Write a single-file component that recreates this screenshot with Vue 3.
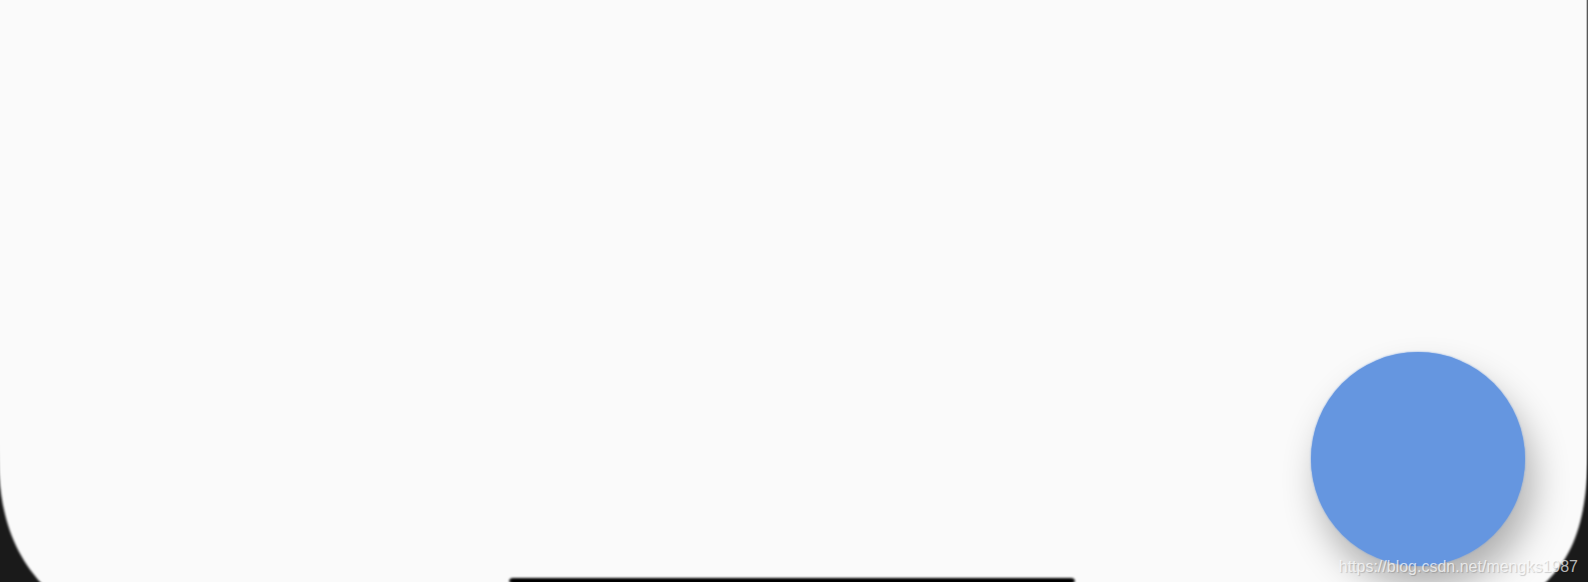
<script setup>
const link = 'https://blog.csdn.net/mengks1987'
</script>

<template>
  <main class="screen">
    <button class="fab" type="button" aria-label="Action"></button>
    <footer class="bottom">
      <svg class="corner left" viewBox="0 0 60 152" aria-hidden="true">
        <path d="M-6 10 L-2 10 C-2 62 3 112 42 154 L-6 154 Z" />
      </svg>
      <div class="notch"></div>
      <svg class="corner right" viewBox="0 0 64 152" aria-hidden="true">
        <path d="M70 0 L65 0 C64 66 60 118 20 154 L70 154 Z" />
      </svg>
    </footer>
    <a class="credit" :href="link">{{ link }}</a>
  </main>
</template>

<style>
body {
  margin: 0;
}
</style>

<style scoped>
.screen {
  position: relative;
  box-sizing: border-box;
  display: flex;
  flex-direction: column;
  justify-content: flex-end;
  min-height: 100vh;
  overflow: hidden;
  border-bottom: 4px solid #fff;
  background:
    linear-gradient(#585858, #585858) right / 1px 100% no-repeat,
    linear-gradient(#c4c4c4, #c4c4c4) right / 2px 100% no-repeat,
    #fafafa;
}

.bottom {
  display: flex;
  align-items: flex-end;
  justify-content: space-between;
}

.corner {
  display: block;
  height: 152px;
  fill: #1a1a1a;
}

.corner path {
  filter: blur(1px);
}

.left {
  width: 60px;
}

.right {
  width: 64px;
}

.notch {
  width: 566px;
  height: 4px;
  border-radius: 8px 8px 0 0;
  background: #000;
  filter: blur(1px);
  box-shadow: 0 4px 0 #000;
}

.fab {
  position: absolute;
  right: 63px;
  bottom: 16px;
  width: 214px;
  height: 214px;
  padding: 0;
  border: 0;
  border-radius: 50%;
  background: #6596e0;
  box-shadow: 0 0 2px #6596e0, 8px 22px 36px rgba(0, 0, 0, 0.3);
}

.credit {
  position: absolute;
  right: 10px;
  bottom: 5px;
  font: 16px/20px "Liberation Sans", Arial, sans-serif;
  color: rgba(255, 255, 255, 0.7);
  text-decoration: none;
  text-shadow: 1px 1px 1px rgba(0, 0, 0, 0.18);
}
</style>
